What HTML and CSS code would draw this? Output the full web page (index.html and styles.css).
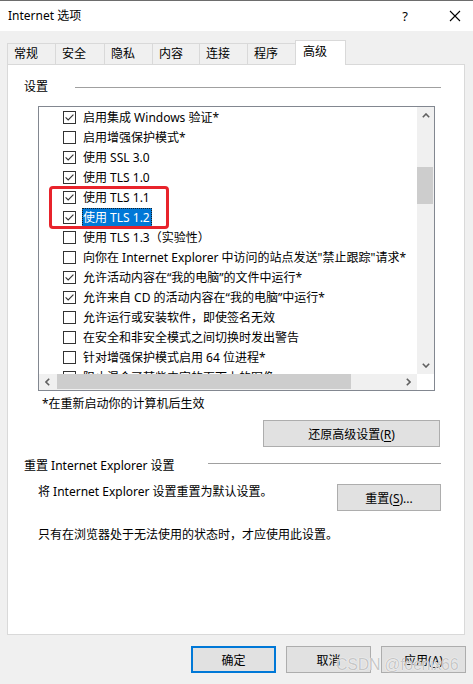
FILE: index.html
```html
<!DOCTYPE html>
<html lang="zh-CN">
<head>
    <meta charset="UTF-8">
    <title>Internet 选项</title>
    <link rel="stylesheet" href="styles.css">
</head>
<body>
    <div class="window">
        <div class="titlebar">
            <span class="title">Internet 选项</span>
            <span class="help">?</span>
            <span class="close">
                <svg width="12" height="12" viewBox="0 0 12 12"><path d="M1 1L11 11M11 1L1 11" stroke="#000" stroke-width="1.1" fill="none"/></svg>
            </span>
        </div>

        <div class="tabs">
            <div class="tab w48">常规</div>
            <div class="tab w49">安全</div>
            <div class="tab w48">隐私</div>
            <div class="tab w47">内容</div>
            <div class="tab w48">连接</div>
            <div class="tab w48">程序</div>
            <div class="tab active">高级</div>
        </div>

        <div class="panel">
            <div class="group-title">
                <span>设置</span>
                <div class="rule"></div>
            </div>

            <div class="listbox">
                <div class="list-view">
                    <ul class="items">
                        <li><span class="check on"></span><span class="label">启用集成 Windows 验证*</span></li>
                        <li><span class="check"></span><span class="label">启用增强保护模式*</span></li>
                        <li><span class="check on"></span><span class="label">使用 SSL 3.0</span></li>
                        <li><span class="check on"></span><span class="label">使用 TLS 1.0</span></li>
                        <li><span class="check on"></span><span class="label">使用 TLS 1.1</span></li>
                        <li><span class="check on"></span><span class="label selected">使用 TLS 1.2</span></li>
                        <li><span class="check"></span><span class="label">使用 TLS 1.3（实验性）</span></li>
                        <li><span class="check"></span><span class="label">向你在 Internet Explorer 中访问的站点发送"禁止跟踪"请求*</span></li>
                        <li><span class="check on"></span><span class="label">允许活动内容在“我的电脑”的文件中运行*</span></li>
                        <li><span class="check on"></span><span class="label">允许来自 CD 的活动内容在“我的电脑”中运行*</span></li>
                        <li><span class="check"></span><span class="label">允许运行或安装软件，即使签名无效</span></li>
                        <li><span class="check"></span><span class="label">在安全和非安全模式之间切换时发出警告</span></li>
                        <li><span class="check"></span><span class="label">针对增强保护模式启用 64 位进程*</span></li>
                        <li><span class="check"></span><span class="label">阻止混合了某些内容的页面上的图像</span></li>
                    </ul>
                    <div class="highlight"></div>
                </div>
                <div class="vscroll">
                    <div class="arrow">
                        <svg width="8" height="5" viewBox="0 0 8 5"><polyline points="0.8,4.2 4,1 7.2,4.2" stroke="#606060" stroke-width="1.6" fill="none"/></svg>
                    </div>
                    <div class="track"><div class="thumb-v"></div></div>
                    <div class="arrow">
                        <svg width="8" height="5" viewBox="0 0 8 5"><polyline points="0.8,0.8 4,4 7.2,0.8" stroke="#606060" stroke-width="1.6" fill="none"/></svg>
                    </div>
                </div>
                <div class="hscroll">
                    <div class="arrow">
                        <svg width="5" height="8" viewBox="0 0 5 8"><polyline points="4.2,0.8 1,4 4.2,7.2" stroke="#606060" stroke-width="1.6" fill="none"/></svg>
                    </div>
                    <div class="track"><div class="thumb-h"></div></div>
                    <div class="arrow">
                        <svg width="5" height="8" viewBox="0 0 5 8"><polyline points="0.8,0.8 4,4 0.8,7.2" stroke="#606060" stroke-width="1.6" fill="none"/></svg>
                    </div>
                </div>
                <div class="corner"></div>
            </div>

            <div class="note">*在重新启动你的计算机后生效</div>

            <div class="restore-row">
                <button class="btn restore">还原高级设置(<u>R</u>)</button>
            </div>

            <div class="group-title second">
                <span>重置 Internet Explorer 设置</span>
                <div class="rule"></div>
            </div>

            <div class="reset-row">
                <span>将 Internet Explorer 设置重置为默认设置。</span>
                <button class="btn reset">重置(<u>S</u>)...</button>
            </div>

            <div class="warning">只有在浏览器处于无法使用的状态时，才应使用此设置。</div>
        </div>

        <div class="footer">
            <button class="btn dlg default">确定</button>
            <button class="btn dlg">取消</button>
            <button class="btn dlg">应用(<u>A</u>)</button>
        </div>

        <div class="watermark">CSDN @foenix66</div>
    </div>
</body>
</html>
```

FILE: styles.css
```css
body {
    margin: 0;
    font-family: "Noto Sans", "Noto Sans CJK SC", sans-serif;
    font-size: 12px;
    color: #000;
    background: #f0f0f0;
    overflow: hidden;
}
.window {
    width: 473px;
    height: 684px;
    position: relative;
    background: #f0f0f0;
}
.titlebar {
    height: 30px;
    background: #fff;
    border-top: 1px solid #6d6d6d;
    display: flex;
    align-items: center;
    padding-left: 8px;
}
.title {
    flex: 1;
    line-height: 16px;
}
.help {
    width: 12px;
    margin-right: 38px;
    font-size: 13px;
    text-align: center;
}
.close {
    width: 12px;
    height: 12px;
    margin-right: 12px;
    display: flex;
}
.tabs {
    display: flex;
    align-items: flex-end;
    height: 24px;
    margin-top: 9px;
    padding-left: 7px;
}
.tab {
    box-sizing: border-box;
    height: 21px;
    line-height: 20px;
    padding-left: 6px;
    border: 1px solid #d9d9d9;
    border-bottom: none;
    border-right: none;
    background: #f0f0f0;
}
.w47 { width: 47px; }
.w48 { width: 48px; }
.w49 { width: 49px; }
.tab.active {
    width: 51px;
    height: 25px;
    margin-bottom: -1px;
    line-height: 22px;
    padding-left: 7px;
    background: #fff;
    border-right: 1px solid #d9d9d9;
    position: relative;
    z-index: 1;
}
.panel {
    box-sizing: border-box;
    width: 458px;
    height: 571px;
    margin-left: 7px;
    background: #fff;
    border: 1px solid #d9d9d9;
    padding: 0 23px 0 16px;
}
.group-title {
    display: flex;
    align-items: center;
    height: 16px;
    margin-top: 14px;
    line-height: 16px;
}
.group-title .rule {
    flex: 1;
    height: 1px;
    margin-left: 27px;
    background: #a0a0a0;
}
.group-title.second {
    margin-top: 11px;
}
.group-title.second .rule {
    margin-left: 33px;
    margin-top: -5px;
}
.listbox {
    box-sizing: border-box;
    width: 397px;
    height: 285px;
    margin: 11px 0 0 14px;
    border: 1px solid #828790;
    display: grid;
    grid-template-columns: 378px 17px;
    grid-template-rows: 267px 16px;
}
.list-view {
    position: relative;
    overflow: hidden;
}
.items {
    list-style: none;
    margin: 0;
    padding: 0;
    width: 560px;
}
.items li {
    height: 20px;
    display: flex;
    align-items: center;
    padding-left: 24px;
    white-space: nowrap;
}
.check {
    box-sizing: border-box;
    width: 13px;
    height: 13px;
    margin-right: 6px;
    border: 1px solid #333;
    background: #fff;
}
.check.on {
    background: url("data:image/svg+xml;utf8,<svg xmlns='http://www.w3.org/2000/svg' width='11' height='11'><polyline points='1.6,5.4 4.2,8 9.4,2.6' stroke='%23333' stroke-width='1.1' fill='none'/></svg>") center no-repeat #fff;
}
.label {
    line-height: 19px;
    padding: 0 2px 0 1px;
}
.label.selected {
    background: #0078d7;
    color: #fff;
    outline: 1px dotted #1d1d1d;
    outline-offset: -1px;
}
.highlight {
    position: absolute;
    left: 10px;
    top: 79px;
    width: 120px;
    height: 43px;
    box-sizing: border-box;
    border: 3px solid #e8232b;
    border-radius: 4px;
}
.vscroll {
    background: #f0f0f0;
    display: flex;
    flex-direction: column;
}
.vscroll .arrow {
    height: 17px;
    display: flex;
    align-items: center;
    justify-content: center;
}
.vscroll .track {
    flex: 1;
}
.thumb-v {
    width: 16px;
    height: 37px;
    margin-top: 43px;
    background: #cdcdcd;
}
.hscroll {
    background: #f0f0f0;
    display: flex;
}
.hscroll .arrow {
    width: 17px;
    display: flex;
    align-items: center;
    justify-content: center;
}
.hscroll .track {
    flex: 1;
    display: flex;
}
.thumb-h {
    width: 294px;
    height: 15px;
    margin-left: 1px;
    background: #cdcdcd;
}
.corner {
    background: #fff;
}
.note {
    line-height: 16px;
    margin: 5px 0 0 18px;
}
.restore-row {
    display: flex;
    justify-content: flex-end;
    margin-top: 8px;
}
.btn {
    box-sizing: border-box;
    font-family: "Noto Sans", "Noto Sans CJK SC", sans-serif;
    font-size: 12px;
    color: #000;
    background: #e1e1e1;
    border: 1px solid #adadad;
    padding: 0;
}
.btn u {
    text-underline-offset: 2px;
}
.restore {
    width: 177px;
    height: 27px;
    margin-right: 1px;
}
.reset-row {
    display: flex;
    justify-content: space-between;
    align-items: flex-start;
    margin-top: 10px;
    padding-left: 14px;
    line-height: 16px;
}
.reset {
    width: 104px;
    height: 27px;
}
.warning {
    line-height: 16px;
    margin: 16px 0 0 14px;
}
.footer {
    display: flex;
    justify-content: flex-end;
    gap: 10px;
    margin-top: 11px;
    padding-right: 7px;
}
.dlg {
    width: 85px;
    height: 27px;
}
.dlg.default {
    border: 2px solid #0078d7;
}
.watermark {
    position: absolute;
    left: 336px;
    top: 656px;
    font-family: "Liberation Sans", sans-serif;
    font-size: 16px;
    letter-spacing: -0.3px;
    color: rgba(150, 150, 150, 0.55);
    text-shadow: 0 0 1px #fff, 0 0 1px #fff;
}
```
